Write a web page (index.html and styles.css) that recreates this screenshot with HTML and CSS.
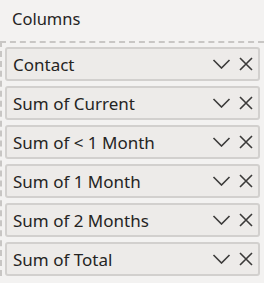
FILE: index.html
```html
<!DOCTYPE html>
<html lang="en">
<head>
  <meta charset="UTF-8" />
  <title>Columns</title>
  <link rel="stylesheet" href="styles.css">
</head>
<body>
  <div class="well-title">Columns</div>
  <div class="well">
    <div class="field"><span class="name">Contact</span><span class="icons"><svg class="chev" viewBox="0 0 18 10"><path d="M1 1 L9 9 L17 1"/></svg><svg class="close" viewBox="0 0 14 14"><path d="M1 1 L13 13 M13 1 L1 13"/></svg></span></div>
    <div class="field"><span class="name">Sum of Current</span><span class="icons"><svg class="chev" viewBox="0 0 18 10"><path d="M1 1 L9 9 L17 1"/></svg><svg class="close" viewBox="0 0 14 14"><path d="M1 1 L13 13 M13 1 L1 13"/></svg></span></div>
    <div class="field"><span class="name">Sum of &lt; 1 Month</span><span class="icons"><svg class="chev" viewBox="0 0 18 10"><path d="M1 1 L9 9 L17 1"/></svg><svg class="close" viewBox="0 0 14 14"><path d="M1 1 L13 13 M13 1 L1 13"/></svg></span></div>
    <div class="field"><span class="name">Sum of 1 Month</span><span class="icons"><svg class="chev" viewBox="0 0 18 10"><path d="M1 1 L9 9 L17 1"/></svg><svg class="close" viewBox="0 0 14 14"><path d="M1 1 L13 13 M13 1 L1 13"/></svg></span></div>
    <div class="field"><span class="name">Sum of 2 Months</span><span class="icons"><svg class="chev" viewBox="0 0 18 10"><path d="M1 1 L9 9 L17 1"/></svg><svg class="close" viewBox="0 0 14 14"><path d="M1 1 L13 13 M13 1 L1 13"/></svg></span></div>
    <div class="field"><span class="name">Sum of Total</span><span class="icons"><svg class="chev" viewBox="0 0 18 10"><path d="M1 1 L9 9 L17 1"/></svg><svg class="close" viewBox="0 0 14 14"><path d="M1 1 L13 13 M13 1 L1 13"/></svg></span></div>
  </div>
</body>
</html>
```
FILE: styles.css
```css
body {
  margin: 0;
  background: #f3f2f1;
  font-family: 'Noto Sans', sans-serif;
  color: #252423;
  width: 264px;
  height: 283px;
  overflow: hidden;
}
.well-title {
  font-size: 16.5px;
  height: 41px;
  line-height: 20px;
  padding: 9px 0 0 12px;
  box-sizing: border-box;
}
.well {
  border-top: 2px dashed #c8c6c4;
  border-left: 2px dashed #c8c6c4;
  box-sizing: border-box;
  width: 100%;
  padding: 4px 0 0 3px;
  display: flex;
  flex-direction: column;
  gap: 5px;
}
.field {
  width: 255px;
  height: 34px;
  box-sizing: border-box;
  background: #edebe9;
  border: 2px solid #d2d0ce;
  border-radius: 3px;
  display: flex;
  align-items: center;
  justify-content: space-between;
  padding: 0 5px 0 6px;
  font-size: 17px;
}
.icons {
  display: flex;
  align-items: center;
  gap: 8px;
}
.chev {
  width: 19px;
  height: 10px;
}
.close {
  width: 14px;
  height: 14px;
}
svg path {
  fill: none;
  stroke: #3b3a39;
  stroke-width: 1.6;
}
```
